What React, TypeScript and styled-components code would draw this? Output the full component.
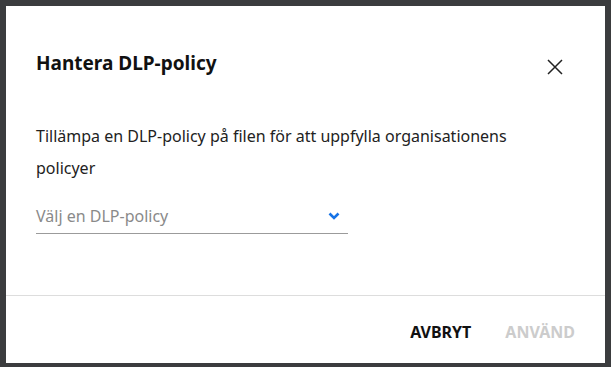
import styled, { createGlobalStyle } from "styled-components";

const Global = createGlobalStyle`
    html, body {
        margin: 0;
        height: 100%;
    }
    body {
        background: #3b3c3e;
        font-family: "Noto Sans", sans-serif;
    }
`

const Backdrop = styled.div`
    width: 611px;
    height: 367px;
    padding: 6px 6px 4px 6px;
    box-sizing: border-box;
`

const Dialog = styled.div`
    width: 599px;
    height: 357px;
    background: #fff;
    display: flex;
    flex-direction: column;
`

const Header = styled.div`
    display: flex;
    align-items: center;
    justify-content: space-between;
    padding: 39px 41px 0 30px;
    height: 36px;
`

const Title = styled.h2`
    margin: 0;
    font-size: 19px;
    font-weight: 700;
    color: #111;
`

const CloseButton = styled.button`
    border: 0;
    background: none;
    padding: 0;
    margin-top: 7px;
    width: 18px;
    height: 18px;
    display: flex;
    align-items: center;
    justify-content: center;
    cursor: pointer;
`

const Body = styled.div`
    flex: 1;
    padding: 39px 30px 0 30px;
    border-bottom: 1px solid #dddddd;
`

const Description = styled.p`
    margin: 0;
    max-width: 500px;
    font-size: 16px;
    line-height: 32px;
    color: #222;
`

const Select = styled.div`
    margin-top: 14px;
    width: 312px;
    height: 36px;
    display: flex;
    align-items: center;
    justify-content: space-between;
    border-bottom: 1px solid #9b9b9b;
    box-sizing: border-box;
    padding-right: 8px;
`

const Placeholder = styled.span`
    font-size: 16px;
    color: #8a8a8a;
`

const Footer = styled.div`
    height: 67px;
    box-sizing: border-box;
    padding: 4px 30px 0 0;
    display: flex;
    align-items: center;
    justify-content: flex-end;
    gap: 34px;
`

const TextButton = styled.button<{ $disabled?: boolean }>`
    border: 0;
    background: none;
    padding: 0;
    font-family: "Noto Sans", sans-serif;
    font-size: 16px;
    font-weight: 700;
    color: ${p => p.$disabled ? '#cccccc' : '#111'};
    cursor: ${p => p.$disabled ? 'default' : 'pointer'};
`

export default function App() {
    return (
        <Backdrop>
            <Global />
            <Dialog>
                <Header>
                    <Title>Hantera DLP-policy</Title>
                    <CloseButton aria-label="Stäng">
                        <svg width="16" height="16" viewBox="0 0 16 16">
                            <path d="M1 1 L15 15 M15 1 L1 15" stroke="#222" strokeWidth="1.5" fill="none" />
                        </svg>
                    </CloseButton>
                </Header>
                <Body>
                    <Description>
                        Tillämpa en DLP-policy på filen för att uppfylla organisationens policyer
                    </Description>
                    <Select>
                        <Placeholder>Välj en DLP-policy</Placeholder>
                        <svg width="12" height="8" viewBox="0 0 12 8">
                            <path d="M1.5 1.5 L6 6 L10.5 1.5" stroke="#1673e6" strokeWidth="2.6" fill="none" />
                        </svg>
                    </Select>
                </Body>
                <Footer>
                    <TextButton>AVBRYT</TextButton>
                    <TextButton $disabled>ANVÄND</TextButton>
                </Footer>
            </Dialog>
        </Backdrop>
    )
}
